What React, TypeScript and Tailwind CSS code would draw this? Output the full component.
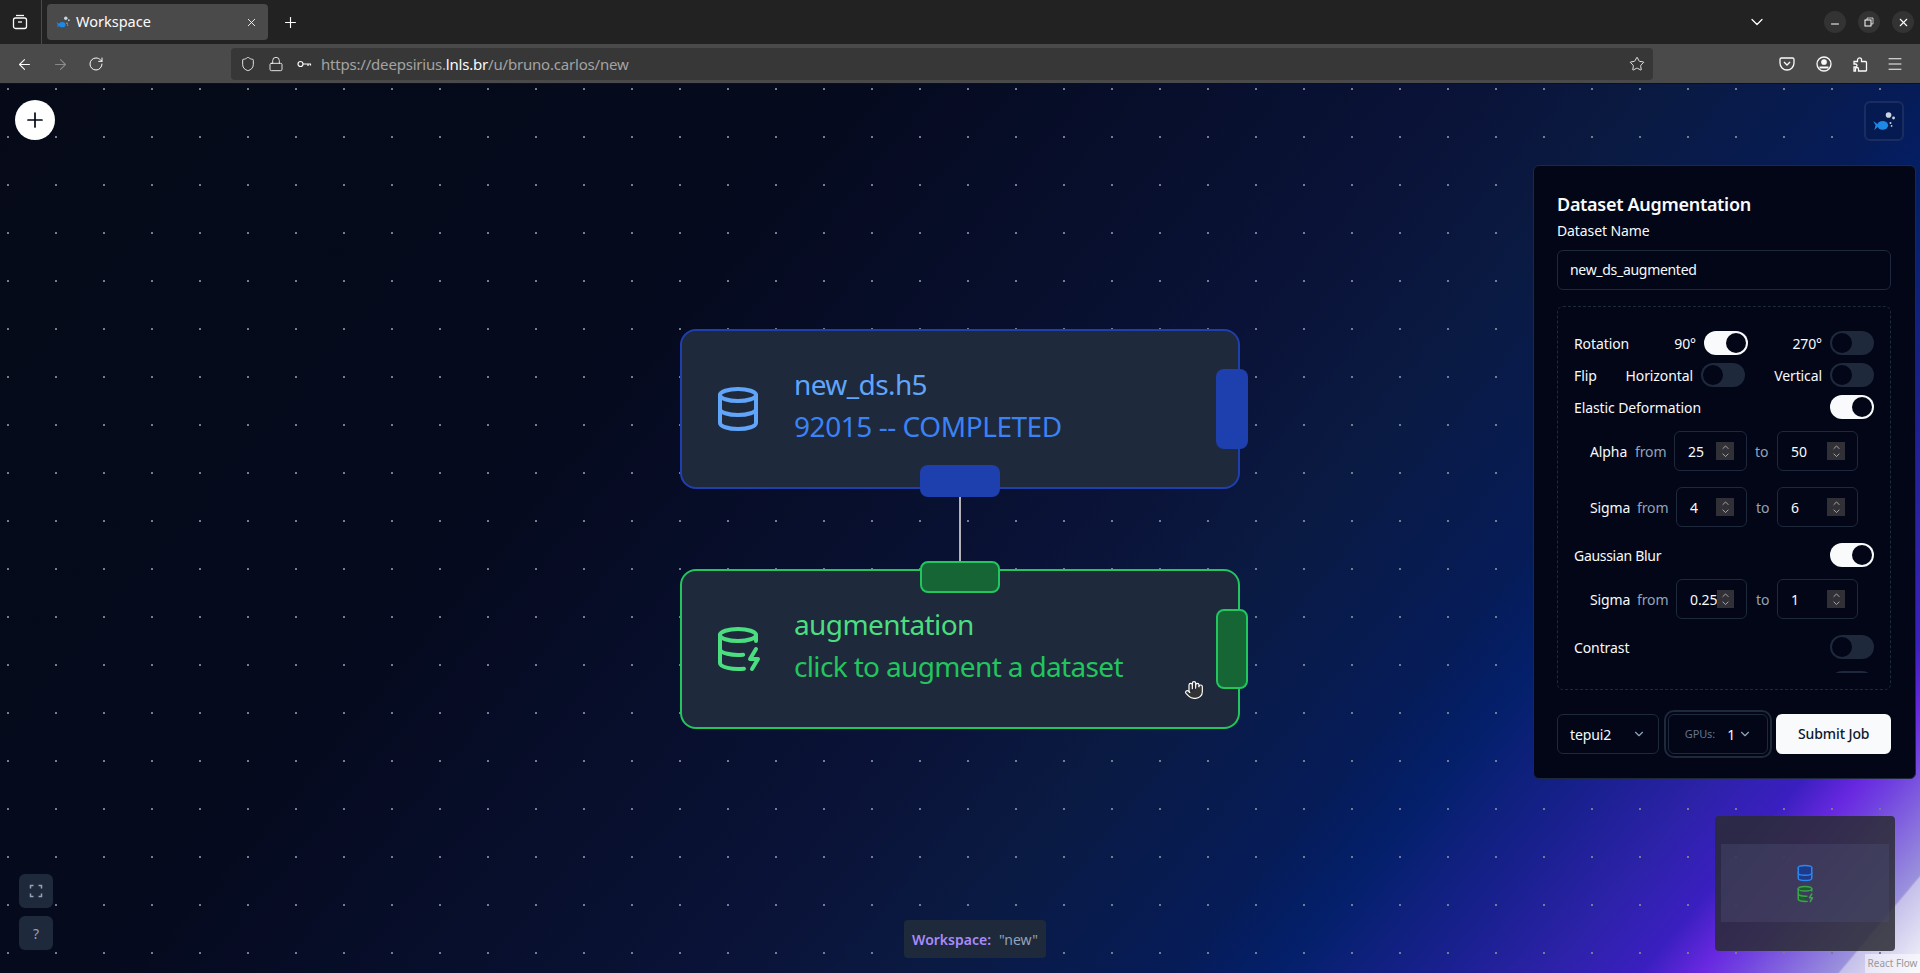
import { ArrowLeft, ArrowRight, RotateCw, Shield, Lock, Star, Menu, Plus, X, Minus, ChevronDown, ChevronUp, Database, DatabaseZap, Hand } from "lucide-react";

const Fish = ({ size = 16 }: { size?: number }) => (
  <svg width={size} height={size} viewBox="0 0 24 24">
    <path d="M2 12 L7 15.4 L7 16.6 L3 20.5 L4.2 16 Z" fill="#1e88e5" />
    <ellipse cx="10.8" cy="16" rx="5" ry="4" fill="#1e88e5" />
    <circle cx="16.2" cy="6.5" r="2.6" fill="#cbd5e1" />
    <circle cx="20.8" cy="9.2" r="1.3" fill="#cbd5e1" />
    <circle cx="18" cy="13.8" r=".9" fill="#cbd5e1" />
    <circle cx="19" cy="16.6" r=".8" fill="#cbd5e1" />
  </svg>
);

const Toggle = ({ on = false }: { on?: boolean }) => (
  <div className={`flex h-6 w-11 shrink-0 items-center rounded-full border-2 border-transparent ${on ? "justify-end bg-[#f8fafc]" : "justify-start bg-[#1e293b]"}`}>
    <div className="h-5 w-5 rounded-full bg-[#020617]" />
  </div>
);

const NumberBox = ({ value, w, pl = "pl-[13px]" }: { value: string; w: string; pl?: string }) => (
  <div className={`flex h-10 items-center rounded-md border border-[#1e293b] ${w} ${pl}`}>
    <span className="flex-1 text-[14px] text-[#f8fafc]">{value}</span>
    <div className="mr-3 flex h-[18px] w-[18px] flex-col items-center justify-center bg-[#303036] text-[#b4b4b8]">
      <ChevronUp size={11} strokeWidth={2} className="-mb-[1.5px]" />
      <ChevronDown size={11} strokeWidth={2} className="-mt-[1.5px]" />
    </div>
  </div>
);

const RangeRow = ({ label, a, b, alpha = false, className = "" }: { label: string; a: string; b: string; alpha?: boolean; className?: string }) => (
  <div className={`flex h-10 items-center text-[14px] ${className}`}>
    <span className={`ml-4 text-[#f8fafc] ${alpha ? "w-[45px]" : "w-[47px]"}`}>{label}</span>
    <span className="w-[39px] text-[#94a3b8]">from</span>
    <NumberBox value={a} w={alpha ? "w-[73px]" : "w-[71px]"} />
    <span className={`text-[#94a3b8] ${alpha ? "ml-2 w-[22px]" : "ml-[9px] w-[21px]"}`}>to</span>
    <NumberBox value={b} w="w-[81px]" />
  </div>
);

const NodeCard = ({ tone, icon, title, sub, top }: { tone: "blue" | "green"; icon: React.ReactNode; title: string; sub: string; top: string }) => {
  const blue = tone === "blue";
  return (
    <div className={`absolute left-[680px] flex h-40 w-[560px] items-center rounded-2xl border-2 bg-[#1e293b] ${top} ${blue ? "border-[#1e40af]" : "border-[#22c55e]"}`}>
      <div className={`ml-8 flex h-12 w-12 shrink-0 items-center justify-center ${blue ? "text-[#60a5fa]" : "text-[#4ade80]"}`}>{icon}</div>
      <div className="mb-2 ml-[32px] flex flex-col">
        <div className={`text-[28px] leading-[42px] font-normal tracking-[-0.6px] ${blue ? "text-[#60a5fa]" : "text-[#4ade80]"}`}>{title}</div>
        <div className={`text-[28px] leading-[42px] ${blue ? "tracking-[-0.45px] text-[#3b82f6]" : "tracking-[-0.65px] text-[#22c55e]"}`}>{sub}</div>
      </div>
      <div className={`absolute -right-[10px] top-[38px] h-20 w-8 rounded-lg ${blue ? "bg-[#1e40af]" : "border-2 border-[#22c55e] bg-[#166534]"}`} />
      {blue ? (
        <div className="absolute bottom-[-10px] left-[238px] h-8 w-20 rounded-lg bg-[#1e40af]" />
      ) : (
        <div className="absolute top-[-10px] left-[238px] h-8 w-20 rounded-lg border-2 border-[#22c55e] bg-[#166534]" />
      )}
    </div>
  );
};

export default function App() {
  return (
    <div className="flex h-[973px] w-[1920px] flex-col overflow-hidden font-['Noto_Sans',sans-serif] text-[14px]">
      {/* tab strip */}
      <div className="flex h-11 shrink-0 items-center bg-[#222222] text-white">
        <div className="flex h-11 w-[42px] items-center justify-center border-r border-[#4a4a4a] pr-[2px]">
          <svg width="16" height="16" viewBox="0 0 16 16" fill="none" stroke="#fbfbfe" strokeWidth="1.3"><path d="M4 1.5h8" /><rect x="1.5" y="4" width="13" height="10.5" rx="2" /><path d="M6 8h4" /></svg>
        </div>
        <div className="ml-[5px] flex h-9 w-[221px] items-center rounded bg-[#4a4a4a] pl-[8px] pr-[10px]">
          <Fish />
          <span className="ml-[5px] flex-1 text-[14.5px] text-[#fbfbfe]">Workspace</span>
          <X size={13} strokeWidth={1.6} />
        </div>
        <Plus size={17} strokeWidth={1.6} className="ml-[14px]" />
        <div className="flex-1" />
        <ChevronDown size={20} strokeWidth={1.5} className="mr-[57px]" />
        <div className="flex gap-3 pr-[6px]">
          <div className="flex h-[22px] w-[22px] items-center justify-center rounded-full bg-[#333333]"><Minus size={12} className="translate-y-[2px]" /></div>
          <div className="flex h-[22px] w-[22px] items-center justify-center rounded-full bg-[#333333]">
            <svg width="10" height="10" viewBox="0 0 10 10" fill="none" stroke="white" strokeWidth="1"><rect x="1" y="3" width="6" height="6" /><path d="M3 3V1h6v6H7" strokeOpacity="0.7" /></svg>
          </div>
          <div className="flex h-[22px] w-[22px] items-center justify-center rounded-full bg-[#333333]"><X size={13} strokeWidth={2} /></div>
        </div>
      </div>
      {/* nav bar */}
      <div className="flex h-10 shrink-0 items-center border-b border-[#101010] bg-[#4a4a4a] pt-px text-[#fbfbfe]">
        <ArrowLeft size={17} strokeWidth={1.5} className="ml-[16px]" />
        <ArrowRight size={17} strokeWidth={1.5} className="ml-[19px] text-[#8a8a8a]" />
        <RotateCw size={16} strokeWidth={1.5} className="ml-[19px]" />
        <div className="ml-[127px] flex h-8 w-[1422px] items-center rounded bg-[#373737] pl-[9px] pr-[8px]">
          <Shield size={16} strokeWidth={1.3} />
          <Lock size={16} strokeWidth={1.3} className="ml-[12px]" />
          <svg width="16" height="16" viewBox="0 0 16 16" fill="none" stroke="#fbfbfe" strokeWidth="1.2" className="ml-[12px]"><circle cx="4.5" cy="8" r="2.5" /><path d="M7 8h8M12 8v2M14.5 8v1.5" /></svg>
          <span className="ml-[9px] flex-1 text-[15px] tracking-[-0.2px] text-[#a3a3a3]">https://deepsirius.<span className="text-[#fbfbfe]">lnls.br</span>/u/bruno.carlos/new</span>
          <Star size={16} strokeWidth={1.3} />
        </div>
        <svg width="16" height="16" viewBox="0 0 16 16" fill="none" stroke="#fbfbfe" strokeWidth="1.3" className="ml-[126px]"><path d="M2.5 2h11A1.5 1.5 0 0 1 15 3.5V7A7 7 0 0 1 1 7V3.5A1.5 1.5 0 0 1 2.5 2Z" /><path d="M5 6l3 3 3-3" /></svg>
        <svg width="16" height="16" viewBox="0 0 16 16" fill="none" stroke="#fbfbfe" strokeWidth="1.3" className="ml-[21px]"><circle cx="8" cy="8" r="7" /><circle cx="8" cy="6" r="2.2" fill="#fbfbfe" /><path d="M3.5 11.5h9" strokeWidth="2" /></svg>
        <svg width="16" height="16" viewBox="0 0 16 16" fill="none" stroke="#fbfbfe" strokeWidth="1.3" className="ml-[20px]"><path d="M2 5.5h3.5V4a2.2 2.2 0 0 1 3-2l1 1v2.5H13.5a1 1 0 0 1 1 1v8a.5.5 0 0 1-.5.5H6.5V13a1.5 1.5 0 0 0-3 0v2H2V11h1.5a1.5 1.5 0 0 0 0-3H2Z" /></svg>
        <Menu size={18} strokeWidth={1.3} className="ml-[18px]" />
      </div>
      {/* canvas */}
      <div className="relative min-h-0 flex-1 bg-[radial-gradient(circle,#747c8e_1.4px,transparent_1.4px),linear-gradient(130deg,#060a18_0%,#050a1e_32%,#0a1338_55%,#0a1a42_62.5%,#061c58_72%,#04206b_76%,#1a2090_82%,#2c22a8_86%,#3a1fc0_89.5%,#6828e0_91.7%,#7040e0_93%,#9a92dc_96.9%,#c4c0ea_97%,#f4f4fa_100%)] bg-[length:48px_48px,100%_100%] bg-[position:-16px_-19px,0_0]">
        <button className="absolute left-[15px] top-4 flex h-10 w-10 items-center justify-center rounded-full bg-white text-[#020617]"><Plus size={24} strokeWidth={1.7} /></button>
        <div className="absolute left-[1864px] top-[17px] flex h-10 w-10 items-center justify-center rounded-md border-2 border-[#1a2c60] bg-[#051a50]"><Fish size={26} /></div>

        <div className="absolute left-[959px] top-[413px] h-16 w-[2px] bg-[#b1b1b7]" />
        <NodeCard tone="blue" icon={<Database size={48} />} title="new_ds.h5" sub="92015 -- COMPLETED" top="top-[245px]" />
        <NodeCard tone="green" icon={<DatabaseZap size={48} />} title="augmentation" sub="click to augment a dataset" top="top-[485px]" />
        <div className="absolute left-[1184px] top-[596px] text-white">
          <Hand size={20} fill="#333" strokeWidth={1.4} />
        </div>

        {/* panel */}
        <div className="absolute left-[1533px] top-[81px] flex h-[614px] w-[383px] flex-col rounded-md border border-[#1e293b] bg-[#020617] pl-[23px] pr-[24px] pt-[24px] tracking-[-0.1px] text-[#f8fafc]">
          <div className="text-[18px] leading-[28px] font-semibold tracking-[-0.3px]">Dataset Augmentation</div>
          <div className="mt-[3px] text-[14px] leading-5">Dataset Name</div>
          <div className="mt-[9px] flex h-10 items-center rounded-md border border-[#1e293b] px-3 pb-px text-[14px] tracking-[-0.3px]">new_ds_augmented</div>
          <div className="mt-[16px] h-[384px] rounded-md border border-dashed border-[#1e293b] px-4 pb-4 pt-4">
            <div className="h-[350px] overflow-hidden pt-2">
              <div className="flex h-6 items-center">
                <div className="flex w-[174px] items-center justify-between"><span>Rotation</span><div className="flex items-center gap-2"><span>90°</span><Toggle on /></div></div>
                <div className="flex flex-1 items-center justify-end gap-2"><span>270°</span><Toggle /></div>
              </div>
              <div className="mt-2 flex h-6 items-center">
                <div className="flex w-[171px] items-center justify-between"><span>Flip</span><div className="flex items-center gap-2"><span>Horizontal</span><Toggle /></div></div>
                <div className="flex flex-1 items-center justify-end gap-2"><span>Vertical</span><Toggle /></div>
              </div>
              <div className="mt-2 flex h-6 items-center justify-between"><span>Elastic Deformation</span><Toggle on /></div>
              <RangeRow label="Alpha" a="25" b="50" alpha className="mt-3" />
              <RangeRow label="Sigma" a="4" b="6" className="mt-4" />
              <div className="mt-4 flex h-6 items-center justify-between"><span className="tracking-[-0.3px]">Gaussian Blur</span><Toggle on /></div>
              <RangeRow label="Sigma" a="0.25" b="1" className="mt-3" />
              <div className="mt-4 flex h-6 items-center justify-between"><span>Contrast</span><Toggle /></div>
              <div className="mt-3 flex justify-end"><Toggle /></div>
            </div>
          </div>
          <div className="mt-[24px] flex h-10 items-center">
            <div className="flex h-10 w-[102px] items-center justify-between rounded-md border border-[#1e293b] pl-3 pr-3">
              <span>tepui2</span><ChevronDown size={14} className="text-[#94a3b8]" />
            </div>
            <div className="ml-[9px] flex h-10 w-[101px] items-center rounded-md border border-[#1e293b] pl-[16px] outline-2 outline-offset-2 outline-[#1e293b]">
              <span className="text-[11px] text-[#64748b]">GPUs:</span><span className="ml-[12px] text-[14px]">1</span><ChevronDown size={14} className="ml-[3px] shrink-0 text-[#94a3b8]" />
            </div>
            <button className="ml-2 h-10 w-[115px] rounded-md bg-[#f8fafc] pb-px text-[14px] font-medium text-[#0f172a]">Submit Job</button>
          </div>
        </div>

        {/* left controls */}
        <div className="absolute left-[19px] top-[790px] flex h-[34px] w-[34px] items-center justify-center rounded-md bg-[#1e293b]">
          <svg width="14" height="14" viewBox="0 0 14 14" fill="none" stroke="#94a3b8" strokeWidth="1.5"><path d="M1.5 4.5V1.5H4.5M9.5 1.5H12.5V4.5M12.5 9.5V12.5H9.5M4.5 12.5H1.5V9.5" /></svg>
        </div>
        <div className="absolute left-[19px] top-[832px] flex h-[34px] w-[34px] items-center justify-center rounded-md bg-[#1e293b] text-[14px] text-[#94a3b8]">?</div>

        {/* workspace tag */}
        <div className="absolute left-[904px] top-[836px] flex h-[38px] w-[142px] items-center justify-center gap-2 rounded bg-[#1e293b] text-[14px]">
          <span className="font-semibold text-[#a78bfa]">Workspace:</span><span className="text-[#94a3b8]">"new"</span>
        </div>

        {/* minimap */}
        <div className="absolute left-[1715px] top-[732px] h-[135px] w-[180px] rounded-sm bg-[#2a2b34]/85">
          <div className="absolute left-[6px] top-[28px] flex h-[78px] w-[168px] flex-col items-center justify-center gap-[3px] bg-[#4a4a6e]/45">
            <Database size={18} strokeWidth={2} className="text-[#2a86f0]" fill="#1e3a8a" />
            <DatabaseZap size={18} strokeWidth={2} className="text-[#3ca34a]" fill="#1f5a34" />
          </div>
        </div>

        {/* attribution */}
        <div className="absolute bottom-0 right-0 flex h-[19px] w-[55px] items-center justify-center bg-white/50 text-[10px] text-[#999999]">React Flow</div>
      </div>
    </div>
  );
}
